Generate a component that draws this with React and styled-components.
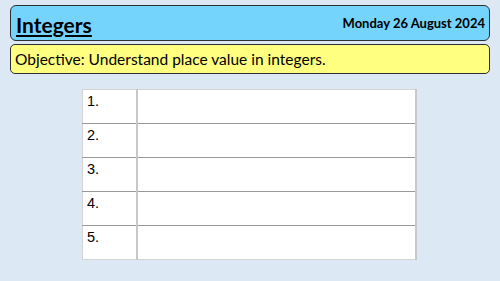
import React from "react"
import styled, { createGlobalStyle } from "styled-components"

const GlobalStyle = createGlobalStyle`
  html, body {
    margin: 0;
    padding: 0;
    background: #dde8f5;
  }
`

const Slide = styled.div`
  width: 500px;
  height: 281px;
  box-sizing: border-box;
  padding: 5px 10px 0 10px;
  font-family: Lato, "Open Sans", sans-serif;
  color: #000;
`

const TitleBar = styled.div`
  height: 36px;
  box-sizing: border-box;
  background: #75d4fc;
  border: 1.5px solid #2b2f33;
  border-radius: 6px;
  display: flex;
  align-items: center;
  justify-content: space-between;
  padding: 0 4px 0 5px;
`

const Title = styled.h1`
  margin: 2px 0 0 0;
  font-size: 21px;
  font-weight: 700;
  text-decoration: underline;
  text-decoration-thickness: 2px;
  text-underline-offset: 2px;
`

const DateText = styled.span`
  font-size: 13px;
  font-weight: 700;
  margin-top: -1px;
`

const Objective = styled.div`
  margin-top: 3px;
  height: 30px;
  box-sizing: border-box;
  background: #ffff80;
  border: 1.5px solid #2b2f33;
  border-radius: 5px;
  display: flex;
  align-items: center;
  padding: 0 4px;
  font-size: 15.5px;
`

const TableWrap = styled.div`
  display: flex;
  justify-content: flex-start;
  padding: 15px 0 0 72px;
`

const Table = styled.table`
  width: 335px;
  border-collapse: collapse;
  background: #fff;
  border: 1px solid #d4d4d4;
  border-right: 2px solid #c8c8c8;
  font-family: "Liberation Sans", Arial, sans-serif;
  font-size: 14.5px;
`

const Row = styled.tr`
  height: 34px;
  & + & td {
    border-top: 1.5px solid #999;
  }
`

const NumCell = styled.td`
  width: 49px;
  vertical-align: top;
  padding: 3px 0 0 4px;
  border-right: 2px solid #c8c8c8;
`

const AnswerCell = styled.td``

const rows = ["1.", "2.", "3.", "4.", "5."]

export default function App() {
  return (
    <>
      <GlobalStyle />
      <Slide>
        <TitleBar>
          <Title>Integers</Title>
          <DateText>Monday 26 August 2024</DateText>
        </TitleBar>
        <Objective>Objective: Understand place value in integers.</Objective>
        <TableWrap>
          <Table>
            <tbody>
              {rows.map((n) => (
                <Row key={n}>
                  <NumCell>{n}</NumCell>
                  <AnswerCell />
                </Row>
              ))}
            </tbody>
          </Table>
        </TableWrap>
      </Slide>
    </>
  )
}
